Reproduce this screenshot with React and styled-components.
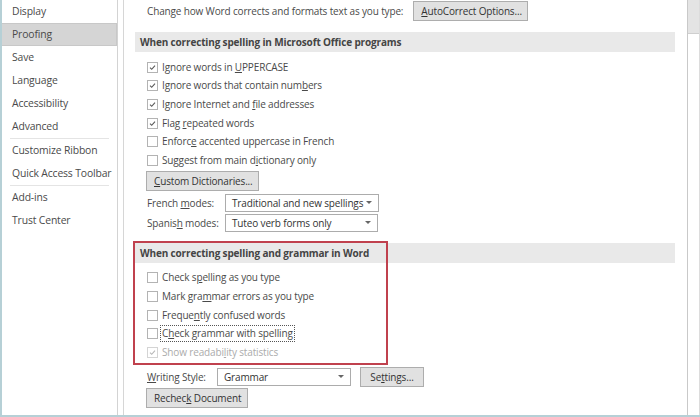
import React from "react";
import styled, { createGlobalStyle } from "styled-components";

const GlobalStyle = createGlobalStyle`
  html, body {
    margin: 0;
    padding: 0;
    background: #ffffff;
  }
  body {
    font-family: "Open Sans", "Noto Sans", sans-serif;
    font-size: 10px;
    letter-spacing: -0.15px;
    color: #4a4a4a;
  }
`;

const Window = styled.div`
  width: 700px;
  height: 417px;
  box-sizing: border-box;
  display: flex;
  border-left: 2px solid #b6d0d6;
  border-bottom: 2px solid #b6d0d6;
  background: #ffffff;
  overflow: hidden;
`;

const Sidebar = styled.nav`
  width: 115px;
  flex-shrink: 0;
  border-right: 1px solid #d3d3d3;
  display: flex;
  flex-direction: column;
  font-size: 10.4px;
`;

const NavItem = styled.div`
  height: 23px;
  padding-left: 10px;
  box-sizing: border-box;
  background: ${(p) => (p.$active ? "#d5d5d5" : "transparent")};
  border: 1px solid ${(p) => (p.$active ? "#c8c8c8" : "transparent")};
  border-left: none;
  line-height: 21px;
  white-space: nowrap;
`;

const NavDivider = styled.div`
  height: 1px;
  margin: 0 8px;
  background: #e4e4e4;
`;

const Gutter = styled.div`
  width: 5px;
  flex-shrink: 0;
`;

const Panel = styled.main`
  flex: 1;
  border-left: 1px solid #d6d6d6;
  padding: 0 12px 0 11px;
  display: flex;
  flex-direction: column;
  min-width: 0;
`;

const Scrollbar = styled.div`
  width: 11px;
  flex-shrink: 0;
  border-left: 1px solid #c9c9c9;
  border-right: 1px solid #dcdcdc;
  display: flex;
  flex-direction: column;
`;

const Thumb = styled.div`
  height: 33px;
  background: #e4e4e4;
  border-bottom: 1px solid #cfcfcf;
`;

const Row = styled.div`
  display: flex;
  align-items: center;
  gap: ${(p) => p.$gap || 0}px;
  height: ${(p) => p.$h || 19}px;
  padding-left: ${(p) => p.$indent || 0}px;
  margin-top: ${(p) => p.$mt || 0}px;
  white-space: nowrap;
`;

const Button = styled.button`
  font: inherit;
  letter-spacing: inherit;
  color: #333333;
  height: ${(p) => p.$h || 20}px;
  width: ${(p) => (p.$w ? `${p.$w}px` : "auto")};
  padding: 0 ${(p) => p.$px || 7}px;
  background: #e1e1e1;
  border: 1px solid #adadad;
  border-radius: 0;
  margin-left: ${(p) => p.$ml || 0}px;
  white-space: nowrap;
`;

const SectionHeader = styled.div`
  height: 20px;
  line-height: 20px;
  background: #e9e9e9;
  padding-left: 5px;
  font-weight: 700;
  color: #444444;
  margin-top: ${(p) => p.$mt || 0}px;
`;

const Box = styled.span`
  width: 11px;
  height: 11px;
  box-sizing: border-box;
  border: 1px solid ${(p) => (p.$disabled ? "#d4d4d4" : "#b3b3b3")};
  background: #ffffff;
  display: inline-flex;
  align-items: center;
  justify-content: center;
  flex-shrink: 0;
`;

const Label = styled.span`
  color: ${(p) => (p.$disabled ? "#ababab" : "#4a4a4a")};
  border: 1px ${(p) => (p.$focus ? "dotted #555555" : "solid transparent")};
  padding: 0 1px;
  line-height: 15px;
`;

const Key = styled.span`
  text-decoration: underline;
`;

const FieldLabel = styled.span`
  width: ${(p) => p.$w}px;
  flex-shrink: 0;
`;

const Select = styled.div`
  width: ${(p) => p.$w}px;
  height: 18px;
  box-sizing: border-box;
  border: 1px solid #acacac;
  background: #ffffff;
  display: flex;
  align-items: center;
  justify-content: space-between;
  padding: 0 6px 0 6px;
  color: #333333;
`;

const Arrow = styled.span`
  width: 0;
  height: 0;
  border-left: 3px solid transparent;
  border-right: 3px solid transparent;
  border-top: 3px solid #666666;
`;

const Marked = styled.section`
  position: relative;
  margin-top: 11px;
`;

const Highlight = styled.div`
  position: absolute;
  left: -2px;
  top: -2px;
  width: 255px;
  height: 124px;
  box-sizing: border-box;
  border: 2px solid #c0414e;
  pointer-events: none;
`;

const Spacer = styled.div`
  height: ${(p) => p.$h}px;
  flex-shrink: 0;
`;

const Check = ({ color = "#555" }) => (
  <svg width="9" height="9" viewBox="0 0 9 9">
    <path d="M2 4.7 L3.7 6.3 L7 2.6" fill="none" stroke={color} strokeWidth="1.15" />
  </svg>
);

const Option = ({ checked, disabled, focus, children }) => (
  <Row $h={18.6} $indent={12} $gap={2}>
    <Box $disabled={disabled}>{checked && <Check color={disabled ? "#b8b8b8" : "#5a5a5a"} />}</Box>
    <Label $disabled={disabled} $focus={focus}>
      {children}
    </Label>
  </Row>
);

const navItems = [
  ["Display"],
  ["Proofing", true],
  ["Save"],
  ["Language"],
  ["Accessibility"],
  ["Advanced"],
  "-",
  ["Customize Ribbon"],
  ["Quick Access Toolbar"],
  "-",
  ["Add-ins"],
  ["Trust Center"],
];

export default function App() {
  return (
    <>
      <GlobalStyle />
      <Window>
        <Sidebar>
          {navItems.map((item, i) =>
            item === "-" ? (
              <NavDivider key={i} />
            ) : (
              <NavItem key={i} $active={item[1]}>
                {item[0]}
              </NavItem>
            )
          )}
        </Sidebar>
        <Gutter />
        <Panel>
          <Row $h={21} $indent={12}>
            <span>Change how Word corrects and formats text as you type:</span>
            <Button $ml={10} $w={115}>
              <Key>A</Key>utoCorrect Options...
            </Button>
          </Row>
          <SectionHeader $mt={11}>When correcting spelling in Microsoft Office programs</SectionHeader>
          <Spacer $h={6} />
          <Option checked>
            Ignore words in <Key>U</Key>PPERCASE
          </Option>
          <Option checked>
            Ignore words that contain num<Key>b</Key>ers
          </Option>
          <Option checked>
            Ignore Internet and <Key>f</Key>ile addresses
          </Option>
          <Option checked>
            Flag <Key>r</Key>epeated words
          </Option>
          <Option>
            Enforc<Key>e</Key> accented uppercase in French
          </Option>
          <Option>
            Suggest from main d<Key>i</Key>ctionary only
          </Option>
          <Row $h={20} $indent={11} $mt={1}>
            <Button $w={113}>
              <Key>C</Key>ustom Dictionaries...
            </Button>
          </Row>
          <Row $h={18} $indent={12} $mt={3}>
            <FieldLabel $w={78}>
              French <Key>m</Key>odes:
            </FieldLabel>
            <Select $w={154}>
              Traditional and new spellings <Arrow />
            </Select>
          </Row>
          <Row $h={18} $indent={12} $mt={2}>
            <FieldLabel $w={78}>
              Spanis<Key>h</Key> modes:
            </FieldLabel>
            <Select $w={153}>
              Tuteo verb forms only <Arrow />
            </Select>
          </Row>
          <Marked>
            <SectionHeader>When correcting spelling and grammar in Word</SectionHeader>
            <Spacer $h={6} />
            <Option>
              Check s<Key>p</Key>elling as you type
            </Option>
            <Option>
              Mark gra<Key>m</Key>mar errors as you type
            </Option>
            <Option>
              Freque<Key>n</Key>tly confused words
            </Option>
            <Option focus>
              C<Key>h</Key>eck grammar with spelling
            </Option>
            <Option checked disabled>
              Show readabi<Key>l</Key>ity statistics
            </Option>
            <Highlight />
          </Marked>
          <Row $h={20} $indent={12} $mt={5}>
            <FieldLabel $w={70}>
              <Key>W</Key>riting Style:
            </FieldLabel>
            <Select $w={134}>
              Grammar <Arrow />
            </Select>
            <Button $ml={9} $w={64}>
              Se<Key>t</Key>tings...
            </Button>
          </Row>
          <Row $h={20} $indent={11} $mt={1}>
            <Button $w={102}>
              Rechec<Key>k</Key> Document
            </Button>
          </Row>
        </Panel>
        <Scrollbar>
          <Thumb />
        </Scrollbar>
      </Window>
    </>
  );
}
